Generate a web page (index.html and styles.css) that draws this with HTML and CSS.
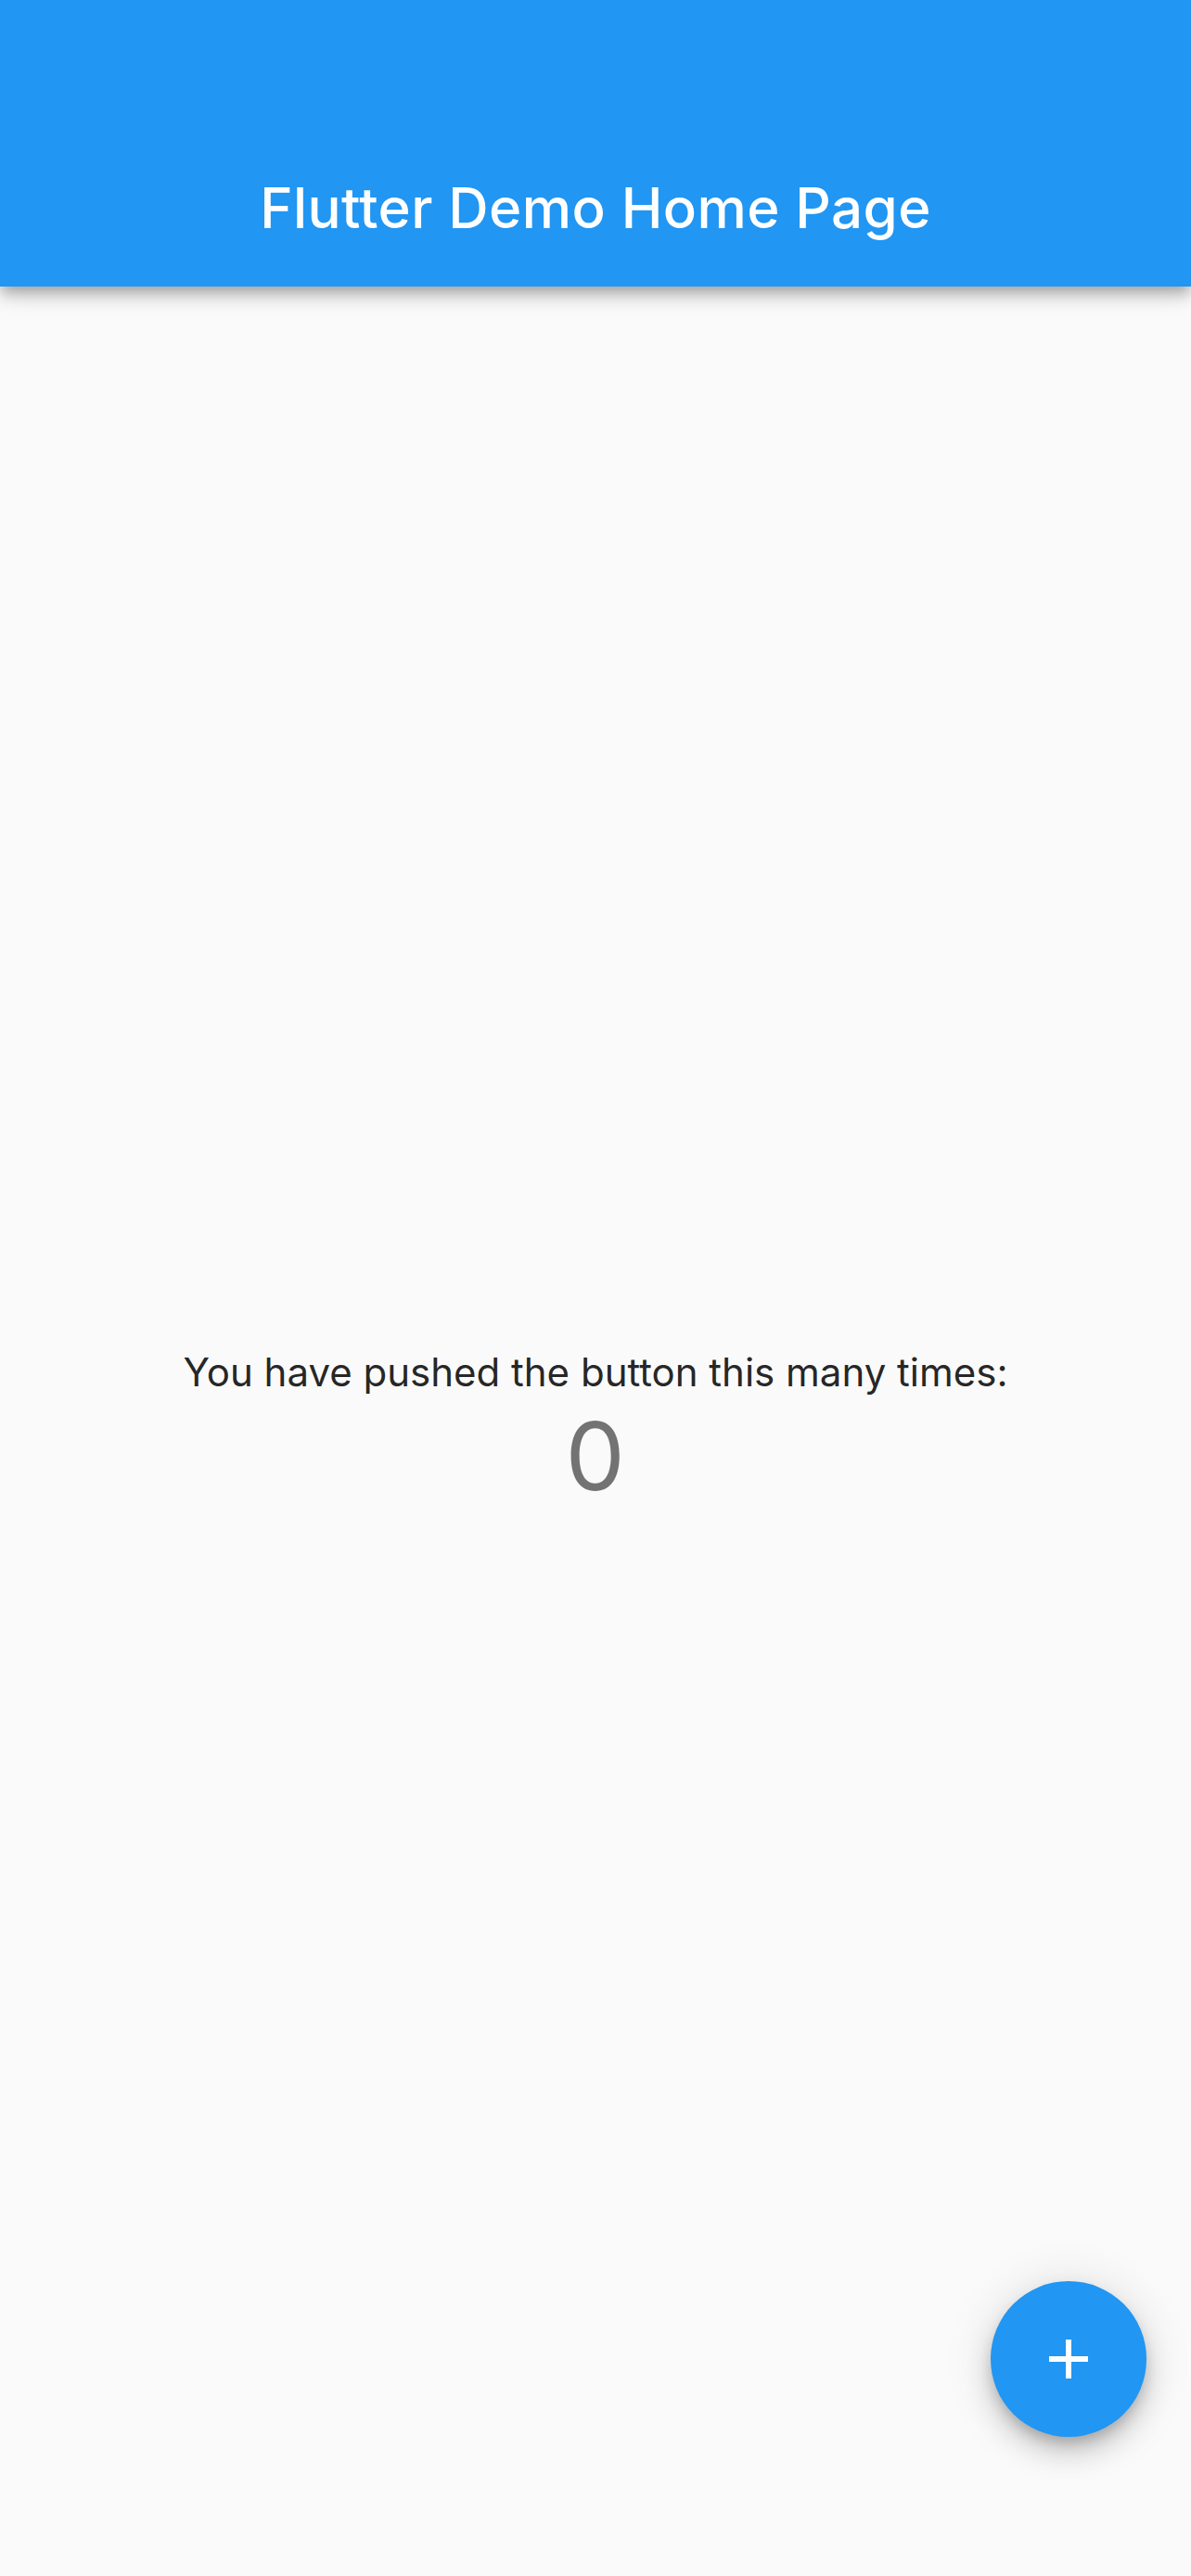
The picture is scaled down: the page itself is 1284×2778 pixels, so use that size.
FILE: index.html
```html
<!DOCTYPE html>
<html lang="en">
<head>
<meta charset="utf-8">
<title>Flutter Demo Home Page</title>
<link rel="stylesheet" href="styles.css">
</head>
<body>
<div class="app">
  <header class="appbar">
    <div class="toolbar">
      <h1 class="title">Flutter Demo Home Page</h1>
    </div>
  </header>
  <main class="content">
    <p class="label">You have pushed the button this many times:</p>
    <p class="counter">0</p>
  </main>
  <button class="fab" type="button" aria-label="Increment">
    <svg class="fab-icon" viewBox="0 0 42 42" width="42" height="42" aria-hidden="true">
      <rect x="18" y="0" width="6" height="42" fill="#fff"/>
      <rect x="0" y="18" width="42" height="6" fill="#fff"/>
    </svg>
  </button>
</div>
</body>
</html>
```

FILE: styles.css
```css
html, body {
  margin: 0;
  padding: 0;
}
body {
  background: #fafafa;
  font-family: Inter, "Noto Sans", "Liberation Sans", sans-serif;
}
.app {
  position: relative;
  width: 1284px;
  height: 2778px;
  display: flex;
  flex-direction: column;
  overflow: hidden;
}
.appbar {
  background: #2196f3;
  padding-top: 141px;
  position: relative;
  z-index: 2;
  box-shadow: 0 6px 12px -3px rgba(0,0,0,0.2), 0 12px 15px 0 rgba(0,0,0,0.14), 0 3px 30px 0 rgba(0,0,0,0.12);
}
.toolbar {
  height: 168px;
  display: flex;
  align-items: center;
  justify-content: center;
}
.title {
  margin: 0;
  color: #fff;
  font-size: 60px;
  font-weight: 500;
  letter-spacing: 0.45px;
  line-height: 1;
  padding-bottom: 2px;
}
.content {
  flex: 1;
  display: flex;
  flex-direction: column;
  align-items: center;
  justify-content: center;
  padding-bottom: 8px;
}
.label {
  margin: 0;
  font-size: 42px;
  line-height: 60px;
  color: rgba(0,0,0,0.87);
  letter-spacing: 0;
}
.counter {
  margin: 0;
  font-size: 102px;
  line-height: 120px;
  color: rgba(0,0,0,0.54);
  letter-spacing: 0.75px;
}
.fab {
  position: absolute;
  right: 48px;
  bottom: 150px;
  width: 168px;
  height: 168px;
  border: none;
  border-radius: 50%;
  background: #2196f3;
  padding: 0;
  display: flex;
  align-items: center;
  justify-content: center;
  box-shadow: 0 9px 15px -3px rgba(0,0,0,0.2), 0 18px 30px 0 rgba(0,0,0,0.14), 0 3px 54px 0 rgba(0,0,0,0.12);
}
.fab-icon {
  display: block;
}
```
